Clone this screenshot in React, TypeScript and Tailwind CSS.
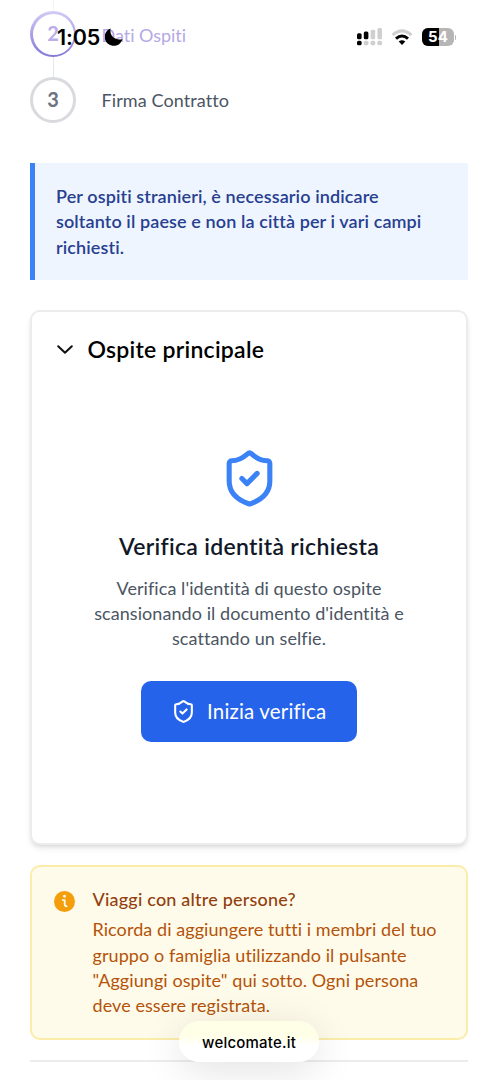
import React from "react";

type LineProps = {
  children: React.ReactNode;
  className?: string;
};

const Line: React.FC<LineProps> = ({ children, className = "" }) => (
  <span className={`block whitespace-nowrap ${className}`}>{children}</span>
);

const ShieldIcon: React.FC<{ className: string }> = ({ className }) => (
  <svg
    viewBox="0 0 24 24"
    fill="none"
    stroke="currentColor"
    strokeWidth="2"
    strokeLinecap="round"
    strokeLinejoin="round"
    className={className}
  >
    <path d="M20 13c0 5-3.5 7.5-7.66 8.95a1 1 0 0 1-.67-.01C7.5 20.5 4 18 4 13V6a1 1 0 0 1 1-1c2 0 4.5-1.2 6.24-2.72a1.17 1.17 0 0 1 1.52 0C14.51 3.81 17 5 19 5a1 1 0 0 1 1 1z" />
    <path d="m9 12 2 2 4-4" />
  </svg>
);

const StatusBar: React.FC = () => (
  <div className="absolute inset-x-0 top-0 h-[72px] text-black">
    <span className="absolute left-[57px] top-[24px] font-['Inter'] text-[21.5px] font-semibold leading-[27px] tracking-[-0.1px]">
      1:05
    </span>
    <svg viewBox="0 0 18 18" className="absolute left-[105px] top-[28px] size-[18px]">
      <path d="M5.6 0.4C4.2 7.8 10.2 13 17.4 11.2A9 9 0 1 1 5.6 .4Z" fill="#000" />
    </svg>
    {/* Segnale */}
    <svg viewBox="0 0 26 18" className="absolute left-[357px] top-[28px] h-[18px] w-[26px]">
      <g fill="#000">
        <rect x="0" y="5.2" width="4.6" height="6" rx="1.5" />
        <rect x="6.8" y="3.6" width="4.6" height="7.6" rx="1.5" />
        <rect x="0" y="12.7" width="4.6" height="4.6" rx="1.5" />
      </g>
      <g fill="#cfcfcf">
        <rect x="13.6" y="1.7" width="4.6" height="9.5" rx="1.5" />
        <rect x="20.4" y="0" width="4.6" height="11.2" rx="1.5" />
        <rect x="6.8" y="12.7" width="4.6" height="4.6" rx="1.5" />
        <rect x="13.6" y="12.7" width="4.6" height="4.6" rx="1.5" />
        <rect x="20.4" y="12.7" width="4.6" height="4.6" rx="1.5" />
      </g>
    </svg>
    {/* Wi-Fi */}
    <svg viewBox="0 0 22 17" className="absolute left-[391px] top-[28.5px] h-[17px] w-[22px]" fill="none">
      <path d="M1.6 6.1Q11-2.3 20.4 6.1" stroke="#cfcfcf" strokeWidth="3" />
      <path d="M5 9.6Q11 4.4 17 9.6" stroke="#000" strokeWidth="3" />
      <path d="M7.7 12.6Q11 10 14.3 12.6L11 16Z" fill="#000" />
    </svg>
    {/* Batteria */}
    <div className="absolute left-[422px] top-[28px] h-[18px] w-[32px] overflow-hidden rounded-[6px] bg-[#b5b5b5]">
      <div className="h-full w-[17px] bg-black" />
      <span className="absolute inset-0 text-center font-['Inter'] text-[15px] font-bold leading-[18px] text-white">
        54
      </span>
    </div>
    <div className="absolute left-[455px] top-[35px] h-[5px] w-px rounded-r-full bg-[#b5b5b5]" />
  </div>
);

const App: React.FC = () => {
  return (
    <div className="relative h-[1080px] w-[498px] overflow-hidden bg-white px-[30px] font-['Lato',sans-serif] text-[18px] leading-[25.3px] tracking-[0.07px]">
      {/* Passaggi */}
      <div className="flex h-[123px] flex-col">
        <div className="ml-[23px] h-[11px] w-px bg-gray-100" />
        <div className="flex items-center gap-[25.5px]">
          <div className="flex size-[46px] items-center justify-center rounded-full bg-gradient-to-b from-[#d3ccf5] to-[#8378d8] p-[2.5px]">
            <div className="flex size-full items-center justify-center rounded-full bg-white text-[20px] font-bold text-[#b9aeea]">
              2
            </div>
          </div>
          <Line className="pt-[3px] tracking-[-0.03px] text-[#b5a8e4]">Dati Ospiti</Line>
        </div>
        <div className="ml-[23px] h-[20px] w-px bg-gray-200" />
        <div className="flex items-center gap-[25.5px]">
          <div className="flex size-[46px] items-center justify-center rounded-full border-[3px] border-[#d8dade] text-[20px] font-bold text-[#6b7280]">
            3
          </div>
          <Line className="pt-[2px] tracking-[0.1px] text-[#4b5563]">Firma Contratto</Line>
        </div>
      </div>

      {/* Avviso */}
      <div className="mt-[40px] h-[117px] w-[438px] border-l-[5px] border-[#3b82f6] bg-[#eff5ff] pl-[21px] pt-[21px] font-semibold tracking-[0.11px] text-[#27408f]">
        <Line>Per ospiti stranieri, è necessario indicare</Line>
        <Line>soltanto il paese e non la città per i vari campi</Line>
        <Line>richiesti.</Line>
      </div>

      {/* Ospite principale */}
      <div className="mt-[30px] flex h-[535px] w-[438px] flex-col rounded-[10px] border-2 border-[#ebecee] bg-white shadow-md">
        <div className="flex items-center pl-[25px] pt-[21px]">
          <svg viewBox="0 0 16 9" fill="none" className="h-[9px] w-[16px]">
            <path d="M1.2 1.2 8 7.8l6.8-6.6" stroke="#111" strokeWidth="2" strokeLinecap="round" strokeLinejoin="round" />
          </svg>
          <h2 className="ml-[14.5px] whitespace-nowrap text-[23px] font-semibold leading-[32px] tracking-[0.25px] text-black">Ospite principale</h2>
        </div>
        <div className="mt-[83px] flex flex-col items-center text-center">
          <ShieldIcon className="size-[61px] text-[#3b82f6]" />
          <h3 className="mt-[21px] whitespace-nowrap text-[23px] font-semibold leading-[32px] tracking-[0.3px] text-[#111827]">
            Verifica identità richiesta
          </h3>
          <div className="mt-[13.5px] text-[#4b5563]">
            <Line>Verifica l'identità di questo ospite</Line>
            <Line>scansionando il documento d'identità e</Line>
            <Line>scattando un selfie.</Line>
          </div>
          <button className="mt-[30px] flex h-[61px] w-[216px] items-center rounded-[10px] bg-[#2563eb] pl-[30px] text-[20.5px] tracking-[0.18px] text-white">
            <ShieldIcon className="size-[25px]" />
            <span className="ml-[11px] whitespace-nowrap">Inizia verifica</span>
          </button>
        </div>
      </div>

      {/* Altre persone */}
      <div className="mt-[20px] flex h-[175px] w-[438px] rounded-[10px] border-2 border-[#fcecaa] bg-[#fffbeb] pl-[22px] pt-[20px]">
        <svg viewBox="0 0 22 22" className="mt-[4px] size-[21px] shrink-0">
          <circle cx="11" cy="11" r="11" fill="#f59e0b" />
          <circle cx="11" cy="5.5" r="1.5" fill="#fffbeb" />
          <path d="M9.2 9.6h2v4.4q0 2 2 2" stroke="#fffbeb" strokeWidth="1.9" strokeLinecap="round" strokeLinejoin="round" fill="none" />
        </svg>
        <div className="ml-[17.5px]">
          <p className="font-medium tracking-[0.2px] text-[#92400e]">
            <Line>Viaggi con altre persone?</Line>
          </p>
          <div className="mt-[5px] text-[#b45309]">
            <Line>Ricorda di aggiungere tutti i membri del tuo</Line>
            <Line>gruppo o famiglia utilizzando il pulsante</Line>
            <Line>"Aggiungi ospite" qui sotto. Ogni persona</Line>
            <Line>deve essere registrata.</Line>
          </div>
        </div>
      </div>
      <div className="mt-[20px] h-[2px] w-[438px] bg-[#ececee]" />

      <StatusBar />

      {/* Barra indirizzo */}
      <div className="absolute left-[179px] top-[1021px] h-[41px] w-[140px] rounded-full bg-gradient-to-b from-[#fffee6] from-35% to-white to-60% text-center font-['Inter'] text-[15px] font-medium leading-[43px] tracking-[0.2px] text-black shadow-[0_8px_40px_rgba(0,0,0,0.12)]">
        welcomate.it
      </div>
    </div>
  );
};

export default App;
